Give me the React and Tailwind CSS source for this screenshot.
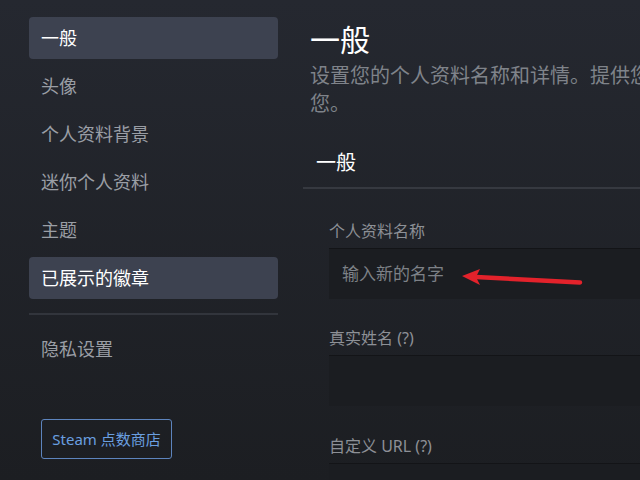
export default function App() {
  const font = { fontFamily: '"Noto Sans", "Noto Sans CJK SC", sans-serif' };
  const navItems = [
    { label: "一般", active: true },
    { label: "头像" },
    { label: "个人资料背景" },
    { label: "迷你个人资料" },
    { label: "主题" },
    { label: "已展示的徽章", active: true },
  ];
  return (
    <div
      className="relative flex h-[480px] w-[640px] overflow-hidden bg-gradient-to-b from-[#252830] to-[#1c1e22]"
      style={font}
    >
      {/* Sidebar */}
      <div className="flex w-[303px] shrink-0 flex-col pl-[29px] pr-[25px] pt-[17px]">
        <div className="flex flex-col gap-[6px]">
          {navItems.map((it, i) => (
            <div
              key={i}
              className={
                it.active
                  ? "flex h-[42px] shrink-0 items-center rounded-[4px] bg-[#3d4250] px-[12px] text-[18px] text-white"
                  : "flex h-[42px] shrink-0 items-center rounded-[4px] px-[12px] text-[18px] text-[#9a9ea5]"
              }
            >
              {it.label}
            </div>
          ))}
        </div>
        <div className="mt-[14px] h-[2px] shrink-0 bg-[#32353c]" />
        <div className="mt-[13px] flex h-[42px] shrink-0 items-center px-[12px] text-[18px] text-[#9a9ea5]">
          隐私设置
        </div>
        <div className="ml-[12px] mt-[49px] flex h-[40px] w-[131px] shrink-0 items-center justify-center rounded-[3px] border border-[#5d84bd] text-[15px] text-[#6a9fe0]">
          Steam 点数商店
        </div>
      </div>

      {/* Main */}
      <div className="w-[700px] shrink-0 pt-[22px]">
        <div className="pl-[7px] text-[30px] leading-[36px] text-white">一般</div>
        <div className="mt-[4px] whitespace-nowrap pl-[7px] text-[20px] leading-[28px] text-[#7f838a]">
          设置您的个人资料名称和详情。提供您的真实姓名可以帮助好友在 Steam 社区中找到
          <br />
          您。
        </div>
        <div className="mt-[21px] flex h-[50px] items-center border-b-2 border-[#363940] pl-[13px] text-[20px] text-white">
          一般
        </div>
        <div className="pl-[26px]">
          <div className="mt-[30px] text-[16px] leading-[24px] text-[#8d9096]">个人资料名称</div>
          <div className="mt-[5px] flex h-[51px] items-center border-t border-[#131417] bg-[#1b1d21] pl-[13px] text-[17px] text-[#7d8187]">
            输入新的名字
          </div>
          <div className="mt-[27px] text-[16px] leading-[24px] text-[#8d9096]">真实姓名 (?)</div>
          <div className="mt-[5px] h-[51px] border-t border-[#131417] bg-[#1b1d21]" />
          <div className="mt-[28px] text-[16px] leading-[24px] text-[#8d9096]">自定义 URL (?)</div>
          <div className="mt-[5px] h-[51px] border-t border-[#131417] bg-[#1b1d21]" />
        </div>
      </div>

      {/* Red arrow annotation */}
      <svg
        className="absolute left-[455px] top-[260px]"
        width="135"
        height="30"
        viewBox="0 0 135 30"
      >
        <line x1="21" y1="17" x2="125" y2="22.5" stroke="#e3222b" strokeWidth="4.5" strokeLinecap="round" />
        <path d="M7 16 L25 9 L21 17 L25 25 Z" fill="#e3222b" />
      </svg>
    </div>
  );
}
